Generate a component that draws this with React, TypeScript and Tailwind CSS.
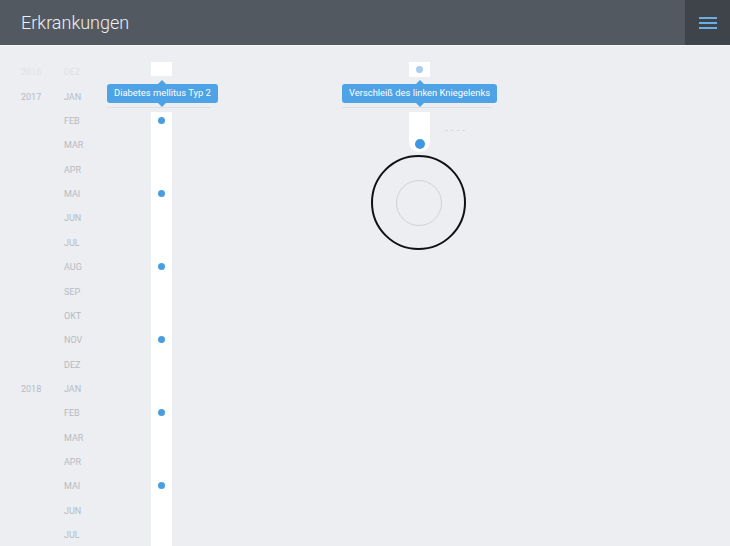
import React from "react";

const rows: { year?: string; month: string; faint?: boolean }[] = [
  { year: "2016", month: "DEZ", faint: true },
  { year: "2017", month: "JAN" },
  { month: "FEB" },
  { month: "MAR" },
  { month: "APR" },
  { month: "MAI" },
  { month: "JUN" },
  { month: "JUL" },
  { month: "AUG" },
  { month: "SEP" },
  { month: "OKT" },
  { month: "NOV" },
  { month: "DEZ" },
  { year: "2018", month: "JAN" },
  { month: "FEB" },
  { month: "MAR" },
  { month: "APR" },
  { month: "MAI" },
  { month: "JUN" },
  { month: "JUL" },
];

const dots = [0, 1, 2, 3, 4, 5, 6];

function Tooltip({ text, className }: { text: string; className: string }) {
  return (
    <div className={"absolute " + className}>
      <div className="relative flex h-[19px] items-center rounded-[3px] bg-[#4da3e6] px-[7px] text-[9.4px] text-white whitespace-nowrap">
        {text}
        <span className="absolute left-1/2 top-[-4px] h-0 w-0 -translate-x-1/2 border-x-[4px] border-b-[4px] border-x-transparent border-b-[#4da3e6]" />
        <span className="absolute left-1/2 bottom-[-4px] h-0 w-0 -translate-x-1/2 border-x-[4px] border-t-[4px] border-x-transparent border-t-[#4da3e6]" />
      </div>
    </div>
  );
}

export default function App() {
  return (
    <div className="h-[546px] w-[730px] overflow-hidden bg-[#eceef2] font-['Roboto','Liberation_Sans',sans-serif]">
      <header className="flex h-[46px] items-stretch border-b border-[#f6f7f9] bg-[#535961]">
        <h1 className="flex flex-1 items-center pl-[21px] text-[18px] font-light text-[#eef0f2]">Erkrankungen</h1>
        <button className="flex w-[45px] flex-col items-center justify-center gap-[3px] bg-[#3f444b]">
          <span className="h-[2px] w-[18px] bg-[#6aaee6]" />
          <span className="h-[2px] w-[18px] bg-[#6aaee6]" />
          <span className="h-[2px] w-[18px] bg-[#6aaee6]" />
        </button>
      </header>

      <main className="relative h-[500px]">
        <div className="flex flex-col pt-[15px]">
          {rows.map((r, i) => (
            <div key={i} className={"flex h-[24.35px] items-center text-[9px] " + (r.faint ? "text-[#e0e2e6]" : "text-[#b7bbc1]")}>
              <span className="w-[64px] pl-[21px]">{r.year ?? ""}</span>
              <span className="w-[40px]">{r.month}</span>
            </div>
          ))}
        </div>

        {/* left column */}
        <div className="absolute left-[151px] top-[16px] h-[14px] w-[21px] bg-white" />
        <div className="absolute left-[151px] top-[66px] bottom-0 flex w-[21px] flex-col items-center gap-[66.05px] bg-white pt-[4.5px]">
          {dots.map((d) => (
            <span key={d} className="h-[7px] w-[7px] shrink-0 rounded-full bg-[#4a9de0]" />
          ))}
        </div>
        <div className="absolute left-[107px] top-[61px] h-px w-[104px] bg-[#dde0e5]" />
        <Tooltip text="Diabetes mellitus Typ 2" className="left-[107px] top-[38px]" />

        {/* right column */}
        <div className="absolute left-[409px] top-[16px] flex h-[15px] w-[21px] items-center justify-center bg-white">
          <span className="h-[7px] w-[7px] rounded-full bg-[#a9cdee]" />
        </div>
        <div className="absolute left-[342px] top-[61px] h-px w-[150px] bg-[#dde0e5]" />
        <Tooltip text="Verschleiß des linken Kniegelenks" className="left-[342px] top-[38px]" />
        <div className="absolute left-[409px] top-[66px] flex h-[40px] w-[21px] items-end justify-center rounded-b-[11px] bg-white pb-[3px]">
          <span className="h-[10px] w-[10px] rounded-full bg-[#3f97e0]" />
        </div>
        <div className="absolute left-[445px] top-[84px] h-px w-[20px] border-t border-dashed border-[#d7dade]" />

        <div className="absolute left-[371px] top-[109px] flex h-[95px] w-[95px] items-center justify-center rounded-full border-2 border-[#111]">
          <div className="h-[46px] w-[46px] rounded-full border border-[#cfd1d4]" />
        </div>
      </main>
    </div>
  );
}
